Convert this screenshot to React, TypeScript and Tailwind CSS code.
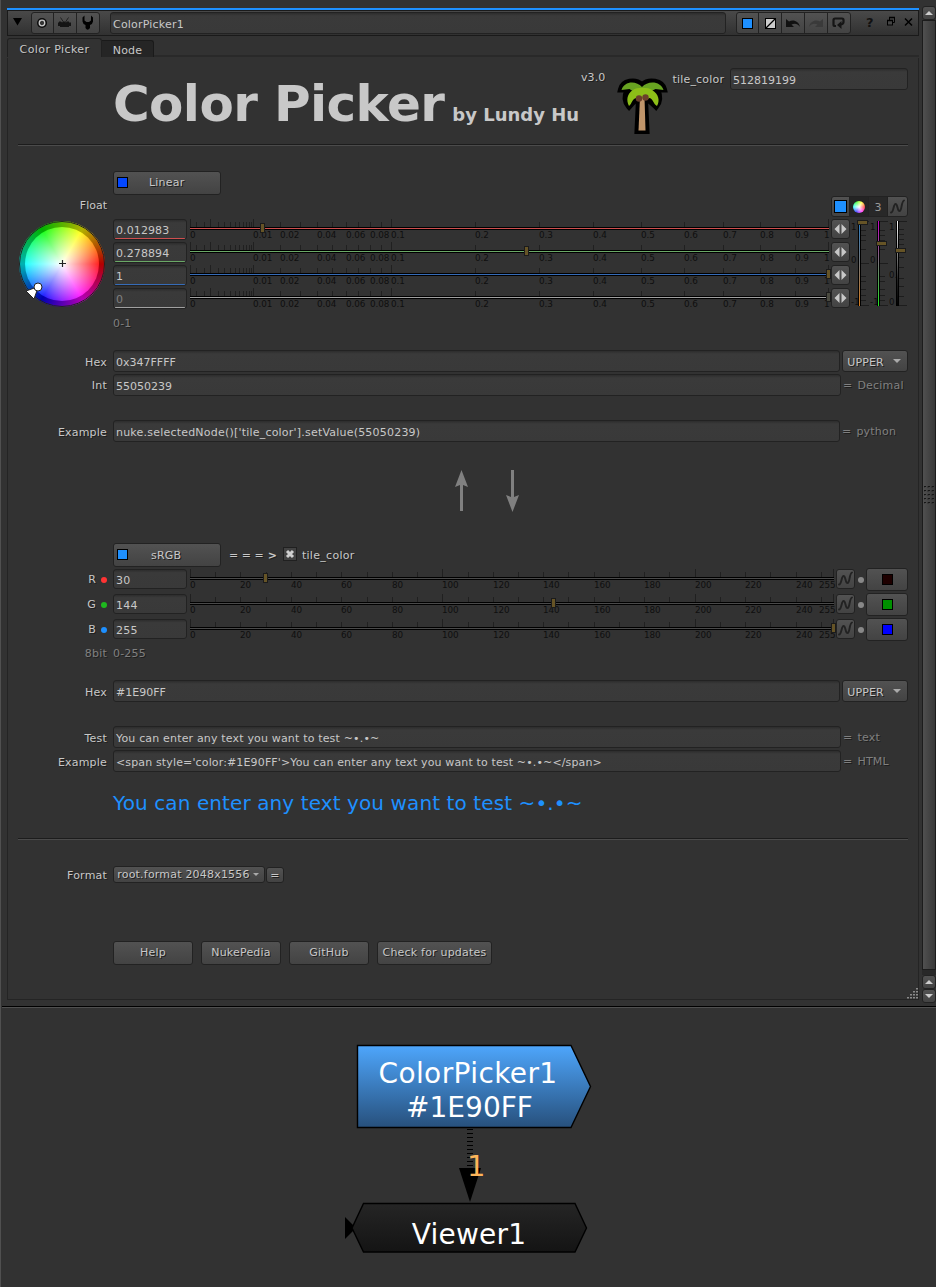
import type { ReactNode } from "react";

const shade = "[text-shadow:1px_1px_0_#1e1e1e]";
const raised = "border border-[#222] rounded-[3px] bg-linear-to-b from-[#525252] to-[#434343] shrink-0";
const sunken = "border border-[#222] rounded-[3px] bg-linear-to-b from-[#2d2d2d] via-[#3a3a3a] via-15% to-[#393939] shrink-0";

function Row({ label, className = "", labelClass = "pt-[2px]", children }: { label?: ReactNode; className?: string; labelClass?: string; children?: ReactNode }) {
  return (
    <div className={`flex shrink-0 ${className}`}>
      <div className={`mr-[6px] flex w-[99px] shrink-0 items-center justify-end whitespace-pre ${labelClass} ${shade}`}>{label}</div>
      {children}
    </div>
  );
}

function Field({ children, className = "", pad = "pt-[3px]" }: { children?: ReactNode; className?: string; pad?: string }) {
  return <div className={`${sunken} flex items-center overflow-hidden whitespace-pre pl-[2px] ${pad} ${className}`}>{children}</div>;
}

function Suffix({ children }: { children: string }) {
  return (
    <span className={`ml-[2px] flex items-center whitespace-pre pt-px text-[#808080] ${shade}`}>
      =<span className="ml-[5px]">{children}</span>
    </span>
  );
}

function Swatch({ className = "" }: { className?: string }) {
  return <div className={`size-[11px] shrink-0 border border-black ${className}`} />;
}

function Button({ children, className = "" }: { children?: ReactNode; className?: string }) {
  return <button className={`${raised} ${shade} flex items-center justify-center whitespace-pre ${className}`}>{children}</button>;
}

function Separator({ className = "" }: { className?: string }) {
  return <div className={`ml-[10px] h-[2px] w-[890px] shrink-0 border-t border-[#1c1c1c] bg-[#4b4b4b] ${className}`} />;
}

type Tick = { x: number; long?: boolean; text?: string; textX?: number };

const logTicks: Tick[] = [
  { x: 0, long: true, text: "0" }, { x: 6 }, { x: 14 }, { x: 20, long: true }, { x: 28 }, { x: 34 }, { x: 40 }, { x: 45 }, { x: 49 }, { x: 53 },
  { x: 56 }, { x: 59 }, { x: 61 }, { x: 63, long: true, text: "0.01" }, { x: 90, text: "0.02" }, { x: 110 }, { x: 127, text: "0.04" }, { x: 142 },
  { x: 156, text: "0.06" }, { x: 168 }, { x: 180, text: "0.08" }, { x: 191 }, { x: 201, long: true, text: "0.1" }, { x: 285, text: "0.2" },
  { x: 349, text: "0.3" }, { x: 403, text: "0.4" }, { x: 451, text: "0.5" }, { x: 494, text: "0.6" }, { x: 533, text: "0.7" },
  { x: 570, text: "0.8" }, { x: 605, text: "0.9" }, { x: 638, long: true, text: "1", textX: 634 },
];

const byteTicks: Tick[] = [];
for (let v = 0; v <= 250; v += 10) {
  byteTicks.push({ x: Math.round(v * 2.523), long: v % 100 === 0, text: v % 20 === 0 ? String(v) : undefined });
}
byteTicks.push({ x: 643, long: true, text: "255", textX: 629 });

function Ruler({ ticks, color, width, handle, handleFill = "#665426" }: { ticks: Tick[]; color: string; width: number; handle: number; handleFill?: string }) {
  return (
    <svg width={width + 5} height="22" className="ml-[3px] shrink-0 overflow-visible tracking-[-0.1px]" shapeRendering="crispEdges">
      {ticks.map((t) => (
        <g key={t.x}>
          <rect x={t.x} y={t.long ? 0 : 3} width="1" height={t.long ? 8 : 5} fill="#202020" />
          {t.text && (
            <text x={t.textX ?? t.x} y="19" fontSize="8.800" fill="#0f0f0f">{t.text}</text>
          )}
        </g>
      ))}
      <rect x="0" y="8" width={width} height="3" fill="#000" />
      <rect x="0" y="9" width={width} height="1" fill={color} />
      <rect x={handle - 2.5} y="4.5" width="4" height="9" fill={handleFill} stroke="#1b1b1b" />
    </svg>
  );
}

const channels = [
  { value: "0.012983", color: "#ce4f4f", handle: 73 },
  { value: "0.278894", color: "#6aa866", handle: 337 },
  { value: "1", color: "#366cb8", handle: 639 },
  { value: "0", color: "#a0a0a0", handle: 639, off: true },
];

function Wheel() {
  return (
    <div className="relative ml-[12px] -mr-px mt-[2px] size-[86px] shrink-0 -translate-x-px rounded-full bg-[conic-gradient(from_90deg,#f00,#f0f,#00f,#0ff,#0f0,#ff0,#f00)]">
      <div className="absolute inset-0 rounded-full border border-[#222] bg-black/30" />
      <div className="absolute inset-[6px] rounded-full bg-[radial-gradient(circle_closest-side,#fff,#ffffff00),conic-gradient(from_90deg,#f22,#f2f,#22f,#2ff,#2f2,#ff2,#f22)]" />
      <svg className="absolute inset-0 overflow-visible" width="86" height="86">
        <path d="M40 42.500h7M43.500 39v7" stroke="#222" strokeWidth="1.200" />
        <path d="M7 70l8 8 4.500-12.500z" fill="#fff" stroke="#222" />
        <circle cx="19" cy="66" r="4" fill="#fff" stroke="#222" />
      </svg>
    </div>
  );
}

function Curve() {
  return (
    <svg width="17" height="18" fill="none" stroke="#222" strokeWidth="1.900" strokeLinecap="round" className="shrink-0">
      <path d="M2 14.500C4.500 14.500 4.500 6 6.500 6c2.500 0 1.500 7 4 7S12 4 15 2.500" />
    </svg>
  );
}

const meterTicks = [0, 9, 14, 19, 28, 42, 55, 60, 68, 74, 79, 84];
const grayTicks = [0, 8, 13, 18, 23, 36, 46, 57, 65, 75, 84];

function Meters() {
  const bars: { x: number; fill: string; knob: number; ticks: number[]; labels: [string, number, number][] }[] = [
    { x: 8, fill: "url(#temp)", knob: 1, ticks: meterTicks, labels: [["1", 0, 9], ["0", 0, 42], ["-1", 0, 84]] },
    { x: 27, fill: "url(#tint)", knob: 22, ticks: meterTicks, labels: [["1", 19, 9], ["0", 19, 42], ["-1", 19, 84]] },
    { x: 46, fill: "url(#level)", knob: 29, ticks: grayTicks, labels: [["1", 38, 9], ["0.", 38, 57], ["0", 38, 84]] },
  ];
  return (
    <svg width="57" height="90" className="ml-px mt-[2px] shrink-0 overflow-visible" shapeRendering="crispEdges">
      <defs>
        <linearGradient id="temp" x2="0" y2="1"><stop stopColor="#2b7fc8" /><stop offset=".5" stopColor="#777" /><stop offset="1" stopColor="#d77e20" /></linearGradient>
        <linearGradient id="tint" x2="0" y2="1"><stop stopColor="#c800c8" /><stop offset=".5" stopColor="#777" /><stop offset="1" stopColor="#20e620" /></linearGradient>
        <linearGradient id="level" x2="0" y2="1"><stop stopColor="#fff" /><stop offset=".7" stopColor="#222" /><stop offset="1" stopColor="#000" /></linearGradient>
      </defs>
      {bars.map((b) => (
        <g key={b.x}>
          {b.ticks.map((y, i) => (
            <rect key={y} x={b.x + 2} y={y} width={i === 0 || y === 42 || y === 84 ? 8 : 5} height="1" fill="#1d1d1d" />
          ))}
          {b.labels.map(([t, x, y]) => (
            <text key={y} x={x} y={y} fontSize="8.600" fill="#0f0f0f">{t}</text>
          ))}
          <rect x={b.x - 1} y="0" width="3" height="85" fill="#000" />
          <rect x={b.x} y="0" width="1" height="85" fill={b.fill} />
          <rect x={b.x - 1.5} y={b.knob - 1.5} width="10" height="4" fill="#665426" stroke="#1b1b1b" />
        </g>
      ))}
    </svg>
  );
}

function Palm() {
  return (
    <svg width="52" height="58" viewBox="0 0 52 58" className="shrink-0">
      <g stroke="#000" strokeWidth="6" strokeLinejoin="miter" fill="#000">
        <path d="M22 22l-1.500 32h9L28 22z" />
        <path d="M25 8C18 2 6 4 4 12.500h7C7 20 8 25 12 29.500c5-6 9-9 13-9s8 3 14 9c4-5 4.500-10 1-17h7C45 4 32 2 25 8z" />
      </g>
      <path d="M25 10C19 3 7 4 4.500 13l8-1 3 2h19l4-2 8 1C44 4 31 3 25 10z" fill="#68a321" />
      <path d="M23 20l-1.500 33.500h7L27.500 20z" fill="#c0956a" />
      <path d="M16 13c3-3 16-3 19 0 7 4 8 11 5 16-4-2-4-8-8-8l-2 2-3-3-4 3-3-2c-5 0-5 6-8 8-3-6-2-12 4-16z" fill="#8cbe18" />
      <circle cx="22" cy="21.500" r="3.200" fill="#6a3f2b" /><circle cx="28.500" cy="20.500" r="3.200" fill="#6a3f2b" />
    </svg>
  );
}

function Header() {
  return (
    <div className="flex h-[26px] shrink-0 items-start border border-[#1a1a1a] bg-linear-to-b from-[#494949] to-[#313131] pt-px">
      <svg width="23" height="22"><path d="M5 6h9l-4.500 7.500z" fill="#000" /></svg>
      <div className={`${raised} flex h-[22px] w-[69px] items-center divide-x divide-[#222]`}>
        <svg width="22" height="20"><circle cx="10" cy="10" r="5" fill="#0c0c0c" /><circle cx="10" cy="10" r="2.800" fill="#333" stroke="#c8c8c8" strokeWidth="1.300" /></svg>
        <svg width="23" height="20"><path d="M5 8.500h2l1 1 1.500-1h1l1.500 1 1-1h2V9.500H17V13h-2v1H6v-1H4V9.500h1z" fill="#141414" /><path d="M9.500 9L6.500 4.500M11.500 9l3-4.500" stroke="#202020" strokeWidth="1" /></svg>
        <svg width="22" height="20"><path d="M7.500 2.500L5.500 4.500v4q.5 3 3 3.500V15q2 3.500 4.500 0v-3q2.500-.5 3-3.500v-4l-2-2v5l-2 1.500h-2.500l-2-1.500z" fill="#000" /></svg>
      </div>
      <Field pad="pt-[3px]" className="ml-[10px] h-[22px] w-[616px]">ColorPicker1</Field>
      <div className={`${raised} ml-[10px] flex h-[22px] w-[115px] items-center divide-x divide-[#222]`}>
        <svg width="22" height="20"><rect x="5.500" y="5.500" width="10" height="10" fill="#1e90ff" stroke="#000" /></svg>
        <svg width="23" height="20"><rect x="6.500" y="5.500" width="10" height="10" fill="#ccc" stroke="#000" /><path d="M7 15l9-9" stroke="#000" strokeWidth="1.300" /></svg>
        <svg width="23" height="20"><path d="M4 6v8h8l-2.500-2.500c4-2 7 0 8.500 2.500-1-6-7-8-11-5.500z" fill="#111" /></svg>
        <svg width="23" height="20"><path d="M18 6v8h-8l2.500-2.500c-4-2-7 0-8.500 2.500 1-6 7-8 11-5.500z" fill="#3a3a3a" /></svg>
        <svg width="22" height="20"><path d="M8 13H7Q5.500 13 5.500 11.500V7Q5.500 5.500 7 5.500h7q1.500 0 1.500 1.500v2q0 2-2.500 2.500" fill="none" stroke="#151515" strokeWidth="2.200" /><path d="M13.500 8v8L9 12z" fill="#151515" /></svg>
      </div>
      <div className="flex h-[20px] w-[67px] items-center pl-[15px]">
        <span className="w-[20px] pt-[2px] text-[13px] font-bold text-[#111]">?</span>
        <svg width="30" height="20" fill="none" stroke="#000"><path d="M3.500 8V5.500h5v5H6.500" /><path d="M3 5.500h6" strokeWidth="1.500" /><rect x="1.500" y="8.500" width="5" height="4.500" fill="#444" /><path d="M1 8.500h6" strokeWidth="1.500" /><path d="M19 6.500l7 7m0-7l-7 7" strokeWidth="1.500" /></svg>
      </div>
    </div>
  );
}

function Tabs() {
  return (
    <div className="mt-[2px] flex h-[19px] shrink-0 items-end">
      <div className={`flex h-[19px] w-[95px] items-center justify-center whitespace-pre rounded-t-[3px] border-x border-t border-[#202020] pt-[3px] tracking-[0.4px] ${shade}`}>Color Picker</div>
      <div className="flex h-[17px] w-[52px] items-center justify-center rounded-tr-[3px] border-r border-t border-[#1a1a1a] bg-[#252525] pt-[3px]">Node</div>
      <div className="h-[2px] flex-1 bg-[#292929]" />
    </div>
  );
}

function Drop({ className = "" }: { className?: string }) {
  return (
    <Button className={`h-[22px] w-[66px] gap-[9px] pr-[2px] ${className}`}>
      <span className="pt-[3px] tracking-[0.1px]">UPPER</span>
      <svg width="8" height="4"><path d="M0 0h8L4 4z" fill="#aaa" /></svg>
    </Button>
  );
}

const bytes = [
  { name: "R", dot: "bg-[#f33]", value: "30", handle: 76, chip: "bg-[#1e0000]" },
  { name: "G", dot: "bg-[#1eb91e]", value: "144", handle: 364, chip: "bg-[#009000]" },
  { name: "B", dot: "bg-[#1e90ff]", value: "255", handle: 644, chip: "bg-[#0000ff]" },
];

function Panel() {
  return (
    <div className="flex h-[942px] w-[912px] shrink-0 flex-col border-x border-b border-[#242424] text-[#c8c8c8]">
      <div className="flex h-[86px] shrink-0">
        <div className="ml-[105px] flex h-[64px] w-[468px] items-baseline whitespace-pre pt-[14px] leading-[64px] font-bold">
          <span className="text-[50px] tracking-[-0.6px]">Color Picker</span>
          <span className="ml-[8px] text-[18px] tracking-normal">by Lundy Hu</span>
        </div>
        <div className={`pt-[13px] leading-[14px] tracking-[0.1px] ${shade}`}>v3.0</div>
        <div className="ml-[12px] mt-[19px]"><Palm /></div>
        <div className={`ml-[3px] mt-[15px] leading-[14px] tracking-[0.2px] ${shade}`}>tile_color</div>
        <Field className="ml-auto mr-[10px] mt-[10px] h-[22px] w-[178px] tracking-normal">512819199</Field>
      </div>
      <Separator />
      <Row className="mt-[25px] h-[24px]">
        <Button className="w-[108px] justify-start pl-[3px]"><Swatch className="-mt-px bg-[#0347ff]" /><span className="ml-[21px]">Linear</span></Button>
      </Row>
      <div className="mt-px flex h-[21px] shrink-0">
        <div className={`flex w-[99px] items-center justify-end pb-px tracking-normal ${shade}`}>Float</div>
        <div className={`${raised} ml-[724px] flex w-[77px] overflow-hidden`}>
          <div className="flex w-[18px] items-center justify-center border-r border-[#222]"><Swatch className="size-[13px] bg-[#1e90ff]" /></div>
          <div className="flex w-[19px] items-center justify-center border-r border-[#222] bg-[#242424]">
            <div className="size-[12px] rounded-full bg-[radial-gradient(circle_closest-side,#fff,#ffffff00),conic-gradient(from_90deg,#f44,#f4f,#44f,#4ff,#4f4,#ff4,#f44)]" />
          </div>
          <div className="flex w-[19px] items-center justify-center border-r border-[#222] bg-[#282828] pt-[2px] text-[#999]">3</div>
          <div className="flex w-[19px] items-center justify-center"><Curve /></div>
        </div>
      </div>
      <div className="mt-[2px] flex h-[92px] shrink-0">
        <Wheel />
        <div className="ml-[8px] flex flex-col gap-[2px]">
          {channels.map((c) => (
            <div key={c.color} className="flex h-[21px]">
              <Field pad="pt-[2px]" className="relative h-[21px] w-[74px] tracking-[0.1px]">
                <span className={c.off ? "text-[#808080]" : ""}>{c.value}</span>
                <svg className="absolute bottom-0 left-px" width="70" height="1"><rect width="70" height="1" fill={c.color} /></svg>
              </Field>
              <Ruler ticks={logTicks} color={c.color} width={639} handle={c.handle} handleFill={c.off ? "#4a4a40" : undefined} />
              <div className={`${raised} -ml-[3px] flex h-[20px] w-[19px] items-center justify-center`}>
                <svg width="13" height="10"><path d="M5.500 0v10L.5 5zM7.500 0v10l5-5z" fill="#c8c8c8" /></svg>
              </div>
            </div>
          ))}
        </div>
        <Meters />
      </div>
      <Row className="mt-[4px] h-[16px] text-[#808080]"><span className={`pt-[2px] ${shade}`}>0-1</span></Row>
      <Row label="Hex" labelClass="pt-[3px]" className="mt-[19px] h-[22px]"><Field className="w-[727px] tracking-normal">0x347FFFF</Field><Drop className="ml-[2px]" /></Row>
      <Row label="Int" className="mt-[2px] h-[22px]"><Field className="w-[728px] tracking-normal">55050239</Field><Suffix>Decimal</Suffix></Row>
      <Row label="Example" labelClass="pt-[3px]" className="mt-[24px] h-[22px]"><Field className="w-[727px] tracking-[0.21px]">nuke.selectedNode()['tile_color'].setValue(55050239)</Field><Suffix>python</Suffix></Row>
      <svg width="80" height="44" className="ml-[445px] mt-[27px] shrink-0" fill="#808080">
        <path d="M8.500 1L15 18l-5-2v26H7V16l-5 2zM59.500 43L53 26l5 2V1h3v27l5-2z" />
      </svg>
      <Row className="mt-[30px] h-[24px]">
        <Button className="w-[108px] justify-start pl-[3px]"><Swatch className="-mt-px bg-[#1e90ff]" /><span className="ml-[23px] pt-px">sRGB</span></Button>
        <span className={`ml-[8px] flex items-center pt-px tracking-normal ${shade}`}>= = = <b className="ml-[4px] font-bold">&gt;</b></span>
        <svg width="14" height="14" className="ml-[6px] mt-[4px]"><rect x=".5" y=".5" width="13" height="13" fill="#424242" stroke="#202020" /><path d="M4 4l6 6m0-6l-6 6" stroke="#d0d0d0" strokeWidth="3" /></svg>
        <span className={`ml-[5px] flex items-center pt-px tracking-[0.3px] ${shade}`}>tile_color</span>
      </Row>
      <div className="mt-[2px] flex shrink-0 flex-col gap-[4px]">
        {bytes.map((b) => (
          <Row key={b.name} labelClass="pt-px" className="h-[21px]" label={<>{b.name}<span className={`ml-[5px] size-[6px] rounded-full ${b.dot}`} /></>}>
            <Field className="h-[20px] w-[74px]">{b.value}</Field>
            <Ruler ticks={byteTicks} color="#4a4a4a" width={644} handle={b.handle} />
            <div className={`${raised} -ml-[3px] flex h-[20px] w-[19px] items-center justify-center`}><Curve /></div>
            <div className="ml-[3px] mt-[8px] size-[6px] shrink-0 rounded-full bg-[#888]" />
            <div className={`${raised} -mt-px ml-[2px] flex h-[23px] w-[42px] items-center justify-center`}><Swatch className={b.chip} /></div>
          </Row>
        ))}
      </div>
      <Row label="8bit" className="mt-[5px] h-[16px] text-[#808080]"><span className={`pt-[2px] ${shade}`}>0-255</span></Row>
      <Row label="Hex" labelClass="pt-[3px]" className="mt-[19px] h-[22px]"><Field className="w-[727px] tracking-normal">#1E90FF</Field><Drop className="ml-[2px]" /></Row>
      <Row label="Test" labelClass="pt-[3px]" className="mt-[24px] h-[22px]"><Field className="w-[728px] tracking-[0.17px]">You can enter any text you want to test ~•.•~</Field><Suffix>text</Suffix></Row>
      <Row label="Example" labelClass="pt-[3px]" className="mt-[2px] h-[22px]"><Field className="w-[728px] tracking-[0.14px]">{"<span style='color:#1E90FF'>You can enter any text you want to test ~•.•~</span>"}</Field><Suffix>HTML</Suffix></Row>
      <div className="ml-[105px] mt-[18px] h-[26px] shrink-0 whitespace-pre text-[20px] leading-[26px] tracking-[0.1px] text-[#1e90ff]">You can enter any text you want to test ~•.•~</div>
      <Separator className="mt-[22px]" />
      <Row label="Format" labelClass="pt-[3px]" className="mt-[26px] h-[17px]">
        <Button className="w-[152px] gap-[3px] pr-[2px]"><span className="pt-px">root.format 2048x1556</span><svg width="6" height="3"><path d="M0 0h6L3 3z" fill="#aaa" /></svg></Button>
        <Button className="ml-px mt-px h-[16px] w-[18px] pt-px">=</Button>
      </Row>
      <Row className="mt-[58px] h-[24px]">
        <div className="flex gap-[8px]">
          <Button className="w-[80px]">Help</Button>
          <Button className="w-[80px]">NukePedia</Button>
          <Button className="w-[80px]">GitHub</Button>
          <Button className="w-[115px]">Check for updates</Button>
        </div>
      </Row>
      <svg width="12" height="11" className="-mr-px mt-auto ml-auto shrink-0" fill="#8a8a8a">
        {[[9, 0], [6, 3], [9, 3], [3, 6], [6, 6], [9, 6], [0, 9], [3, 9], [6, 9], [9, 9]].map(([x, y]) => <rect key={`${x}-${y}`} x={x} y={y} width="2" height="1.500" />)}
      </svg>
    </div>
  );
}

function Arrow({ down = false }: { down?: boolean }) {
  return (
    <div className={`${raised} flex h-[14px] w-[14px] items-center justify-center rounded-[2px]`}>
      <svg width="8" height="4"><path d={down ? "M0 0h8L4 4z" : "M0 4h8L4 0z"} fill="#ccc" /></svg>
    </div>
  );
}

function ScrollBar() {
  return (
    <div className="ml-[3px] flex w-[14px] flex-col pt-[6px]">
      <Arrow />
      <div className="flex h-[950px] w-[14px] items-center justify-center border border-[#1c1c1c] bg-linear-to-r from-[#505050] to-[#383838]">
        <svg width="11" height="18" className="shrink-0">
          {[0, 4, 8, 12, 16].map((y) => [0, 4, 8].map((x) => <path key={`${x}-${y}`} d={`M${x} ${y + 1.5}v-1h2`} fill="none" stroke="#161616" />))}
        </svg>
      </div>
      <div className="h-[5px] bg-[#282828]" />
      <Arrow /><Arrow down />
    </div>
  );
}

function NodeGraph() {
  return (
    <div className="relative flex-1 text-white">
      <svg className="absolute -left-px top-0" width="936" height="279">
        <defs>
          <linearGradient id="node" x2="0" y2="1"><stop stopColor="#4ea6fc" /><stop offset="1" stopColor="#27507c" /></linearGradient>
          <linearGradient id="viewer" x2="0" y2="1"><stop stopColor="#252525" /><stop offset="1" stopColor="#141414" /></linearGradient>
        </defs>
        <path d="M357.500 37.500h213.500l19.500 41-19.500 41H357.500z" fill="url(#node)" stroke="#000" strokeWidth="1.400" />
        <path d="M470 121v40" stroke="#000" strokeWidth="6" strokeDasharray="1 3" />
        <path d="M459 160h22l-11 34z" fill="#000" />
        <path d="M345 209v22l11-11z" fill="#000" />
        <path d="M363.500 195.500H575l11.500 24.500-11.500 24H363.500L352 220z" fill="url(#viewer)" stroke="#000" strokeWidth="1.400" />
      </svg>
      <div className="absolute left-[356px] top-[49px] w-[222px] text-center text-[28px] leading-[34px] whitespace-pre"><span className="tracking-[0.4px]">ColorPicker1</span><br /><span className="pl-[3px] tracking-normal">#1E90FF</span></div>
      <div className="absolute left-[466px] top-[141px] text-[29px] leading-[34px] tracking-normal text-[#fdb55a]">1</div>
      <div className="absolute left-[356px] top-[210px] w-[224px] text-center text-[28px] leading-[34px]">Viewer1</div>
    </div>
  );
}

export default function App() {
  return (
    <div className="flex h-[1287px] w-[936px] flex-col overflow-hidden border-l border-[#505050] bg-[#323232] font-['DejaVu_Sans',sans-serif] text-[11px] leading-[14px] tracking-[0.2px] text-[#c8c8c8]">
      <div className="flex h-[1006px] shrink-0 pl-[6px]">
        <div className="flex w-[912px] shrink-0 flex-col pt-[8px]">
          <div className="h-[2px] shrink-0 bg-[#1e90ff]" />
          <Header />
          <Tabs />
          <div className="flex h-[943px] shrink-0 flex-col pt-px"><Panel /></div>
        </div>
        <ScrollBar />
      </div>
      <div className="ml-px h-[2px] shrink-0 border-t border-black bg-[#505050]" />
      <NodeGraph />
    </div>
  );
}
